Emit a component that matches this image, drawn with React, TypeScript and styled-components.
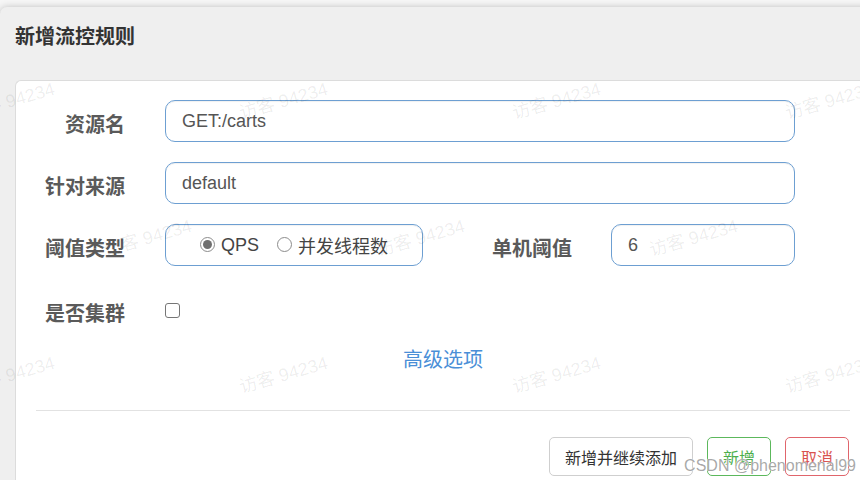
import React from "react";
import styled, { createGlobalStyle, css } from "styled-components";

const GlobalStyle = createGlobalStyle`
  html, body {
    margin: 0;
    padding: 0;
    background: #f6f6f6;
    overflow: hidden;
  }
  body {
    font-family: "Liberation Sans", "Noto Sans CJK SC", sans-serif;
  }
`;

const Page = styled.div`
  position: relative;
  width: 860px;
  height: 480px;
  overflow: hidden;
  padding-top: 7px;
  box-sizing: border-box;
`;

const Dialog = styled.div`
  width: 870px;
  height: 500px;
  background: #efefef;
  border-radius: 7px 0 0 0;
  box-shadow: 0 0 7px rgba(0, 0, 0, 0.22);
  display: flex;
  flex-direction: column;
`;

const Header = styled.div`
  height: 73px;
  box-sizing: border-box;
  padding: 18px 0 0 15px;
`;

const Title = styled.h4`
  margin: 0;
  font-size: 20px;
  line-height: 24px;
  font-weight: bold;
  color: #333;
`;

const Card = styled.div`
  flex: 1;
  margin-left: 15px;
  background: #fff;
  border-top: 1px solid #dcdcdc;
  border-left: 1px solid #dcdcdc;
  border-radius: 6px 0 0 0;
  padding-top: 19px;
  display: flex;
  flex-direction: column;
`;

const Form = styled.div`
  width: 779px;
  display: flex;
  flex-direction: column;
  gap: 20px;
`;

const Row = styled.div<{ $h?: number }>`
  display: flex;
  align-items: center;
  height: ${(p) => p.$h ?? 42}px;
`;

const Label = styled.label<{ $w?: number; $gap?: number }>`
  width: ${(p) => p.$w ?? 109}px;
  margin-right: ${(p) => p.$gap ?? 40}px;
  padding-top: 4px;
  flex-shrink: 0;
  text-align: right;
  font-size: 20px;
  font-weight: bold;
  color: #5a5a5a;
`;

const boxBorder = css`
  box-sizing: border-box;
  height: 42px;
  border: 1px solid #6d9fd2;
  border-radius: 10px;
  background: #fff;
  box-shadow: inset 0 1px 1px rgba(0, 0, 0, 0.06);
`;

const TextInput = styled.input`
  ${boxBorder};
  flex: 1;
  min-width: 0;
  padding: 0 16px;
  font-family: inherit;
  font-size: 18px;
  color: #555;
  outline: none;
`;

const RadioBox = styled.div`
  ${boxBorder};
  flex: none;
  width: 258px;
  display: flex;
  align-items: center;
  justify-content: center;
  gap: 18px;
`;

const RadioOption = styled.span`
  display: inline-flex;
  align-items: center;
  gap: 6px;
  font-size: 18px;
  color: #444;
  white-space: nowrap;
`;

const RadioMark = styled.span<{ $on?: boolean }>`
  width: 15px;
  height: 15px;
  box-sizing: border-box;
  border: 1px solid #8c8c8c;
  border-radius: 50%;
  background: #fff;
  display: inline-flex;
  align-items: center;
  justify-content: center;
  margin-top: -2px;

  &::after {
    content: "";
    width: 9px;
    height: 9px;
    border-radius: 50%;
    background: ${(p) => (p.$on ? "#707070" : "transparent")};
  }
`;

const CheckMark = styled.span`
  width: 15px;
  height: 15px;
  box-sizing: border-box;
  border: 1px solid #767676;
  border-radius: 3px;
  background: #fff;
`;

const Advanced = styled.a`
  align-self: center;
  margin-top: 12px;
  font-size: 20px;
  line-height: 28px;
  color: #4a8fd7;
  text-decoration: none;
  cursor: pointer;
`;

const Divider = styled.hr`
  border: none;
  border-top: 1px solid #e2e2e2;
  margin: 36px 20px 0 20px;
`;

const Footer = styled.div`
  display: flex;
  justify-content: flex-end;
  gap: 14px;
  padding: 26px 21px 0 0;
`;

const Button = styled.button<{ $kind?: "default" | "success" | "danger" }>`
  height: 39px;
  box-sizing: border-box;
  padding: 0 15px;
  border-radius: 5px;
  background: #fff;
  font-family: inherit;
  font-size: 16px;
  cursor: pointer;
  border: 1px solid
    ${(p) =>
      p.$kind === "success" ? "#5cb85c" : p.$kind === "danger" ? "#e0656c" : "#cfcfcf"};
  color: ${(p) =>
    p.$kind === "success" ? "#4cae4c" : p.$kind === "danger" ? "#d9534f" : "#333"};
`;

// tiled "访客 94234" watermark over the whole page
const MarkLayer = styled.div`
  position: absolute;
  inset: 0;
  pointer-events: none;
  overflow: hidden;
  display: flex;
  flex-direction: column;
  gap: 117px;
  padding-top: 91px;
`;

const MarkRow = styled.div<{ $offset: number }>`
  display: flex;
  margin-left: ${(p) => p.$offset}px;
  height: 20px;
`;

const Mark = styled.span`
  flex: none;
  width: 273px;
  font-size: 18px;
  line-height: 20px;
  color: rgba(0, 0, 0, 0.075);
  white-space: nowrap;

  & > span {
    display: inline-block;
    transform: rotate(-16deg);
  }
`;

const Credit = styled.div`
  position: absolute;
  right: 4px;
  bottom: 5px;
  font-size: 16px;
  color: rgba(110, 110, 110, 0.6);
  text-shadow: 0 0 1px #fff, 0 0 1px #fff;
  pointer-events: none;
`;

const markRows = [-35, 102, -35];

export default function App() {
  return (
    <>
      <GlobalStyle />
      <Page>
        <Dialog>
          <Header>
            <Title>新增流控规则</Title>
          </Header>
          <Card>
            <Form>
              <Row>
                <Label>资源名</Label>
                <TextInput readOnly value="GET:/carts" />
              </Row>
              <Row>
                <Label>针对来源</Label>
                <TextInput readOnly value="default" />
              </Row>
              <Row>
                <Label>阈值类型</Label>
                <RadioBox>
                  <RadioOption>
                    <RadioMark $on />
                    QPS
                  </RadioOption>
                  <RadioOption>
                    <RadioMark />
                    并发线程数
                  </RadioOption>
                </RadioBox>
                <Label $w={149} $gap={39}>
                  单机阈值
                </Label>
                <TextInput readOnly value="6" />
              </Row>
              <Row $h={48}>
                <Label>是否集群</Label>
                <CheckMark />
              </Row>
            </Form>
            <Advanced>高级选项</Advanced>
            <Divider />
            <Footer>
              <Button>新增并继续添加</Button>
              <Button $kind="success">新增</Button>
              <Button $kind="danger">取消</Button>
            </Footer>
          </Card>
        </Dialog>
        <MarkLayer>
          {markRows.map((off, i) => (
            <MarkRow key={i} $offset={off}>
              {[0, 1, 2, 3].map((j) => (
                <Mark key={j}>
                  <span>访客 94234</span>
                </Mark>
              ))}
            </MarkRow>
          ))}
        </MarkLayer>
        <Credit>CSDN @phenomenal99</Credit>
      </Page>
    </>
  );
}
